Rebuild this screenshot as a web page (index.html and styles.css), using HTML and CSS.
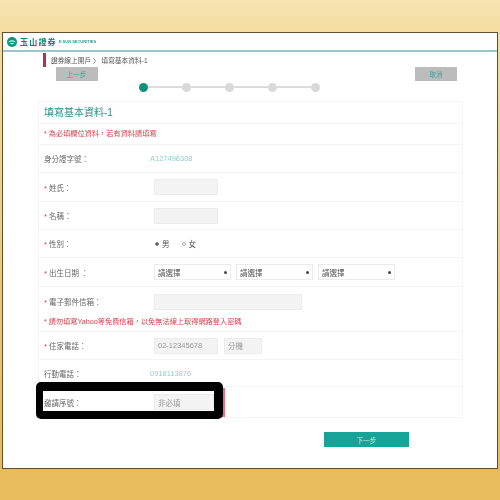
FILE: index.html
```html
<!DOCTYPE html>
<html lang="zh-Hant">
<head>
<meta charset="utf-8">
<title>填寫基本資料-1</title>
<link rel="stylesheet" href="styles.css">
</head>
<body>
<main class="window">
  <div class="soft">
    <header class="topbar">
      <svg class="logo" viewBox="0 0 20 20" aria-hidden="true">
        <circle cx="10" cy="10" r="10" fill="#12907f"/>
        <path d="M2 11 C6 5 14 5 18 11 C14 8.5 6 8.5 2 11Z" fill="#fff"/>
        <path d="M5 13 C8 11.5 12 11.5 15 13 C12 15 8 15 5 13Z" fill="#fff"/>
      </svg>
      <span class="brand">玉山證券</span>
      <span class="brand-en">E.SUN SECURITIES</span>
    </header>
    <div class="crumb"><span class="crumb-mark"></span><span>證券線上開戶 〉 填寫基本資料-1</span></div>
    <div class="actions">
      <span class="btn-grey">上一步</span>
      <span class="btn-grey">取消</span>
    </div>
    <div class="steps">
      <span class="dot active"></span><span class="line"></span>
      <span class="dot"></span><span class="line"></span>
      <span class="dot"></span><span class="line"></span>
      <span class="dot"></span><span class="line"></span>
      <span class="dot"></span>
    </div>
    <section class="card">
      <h1 class="title">填寫基本資料-1</h1>
      <p class="notice"><span class="note">* 為必填欄位資料，若有資料請填寫</span></p>
      <div class="row h28"><span class="label plain">身分證字號：</span><span class="value">A127496308</span></div>
      <div class="row h29"><span class="label"><b>*</b> 姓氏：</span><span class="field w64"></span></div>
      <div class="row h28"><span class="label"><b>*</b> 名稱：</span><span class="field w64"></span></div>
      <div class="row h28"><span class="label"><b>*</b> 性別：</span>
        <span class="gender"><i class="radio on"></i>男<i class="radio gap"></i>女</span></div>
      <div class="row h29"><span class="label"><b>*</b> 出生日期 ：</span>
        <span class="selects">
          <span class="select"><span>請選擇</span><span class="caret"></span></span>
          <span class="select"><span>請選擇</span><span class="caret"></span></span>
          <span class="select"><span>請選擇</span><span class="caret"></span></span>
        </span></div>
      <div class="row-email">
        <div class="email-line"><span class="label"><b>*</b> 電子郵件信箱：</span><span class="field w148"></span></div>
        <p class="note warn">* 請勿填寫Yahoo等免費信箱，以免無法線上取得網路登入密碼</p>
      </div>
      <div class="row h28"><span class="label"><b>*</b> 住家電話：</span>
        <span class="phone"><span class="field w64 txt">02-12345678</span><span class="field w38 txt">分機</span></span></div>
      <div class="row h27"><span class="label plain">行動電話：</span><span class="value">0918113876</span></div>
      <div class="row h30 last"><span class="label plain">邀請序號：</span><span class="field w60 txt">非必填</span></div>
    </section>
    <div class="next-wrap"><span class="btn-next">下一步</span></div>
  </div>
  <div class="mark-red"></div>
  <div class="mark"></div>
</main>
</body>
</html>
```
FILE: styles.css
```css
* { box-sizing: border-box; }
html, body { margin: 0; height: 500px; overflow: hidden; }
body {
  background: linear-gradient(#f6e4b2 0, #f3dda0 32px, #eccb7e 250px, #e8bb5c 470px);
  padding: 32px 2px 32px 2px;
  font-family: "Liberation Sans", "Noto Sans CJK TC", sans-serif;
  font-size: 7.5px;
  color: #666;
}
.window {
  position: relative;
  height: 437px;
  background: #fff;
  border: 1px solid #5e4f30;
  overflow: hidden;
}
.soft { filter: blur(0.45px); height: 100%; }
.topbar {
  display: flex;
  align-items: center;
  height: 19px;
  padding-left: 4px;
  background: #fdfefe;
  border-bottom: 2px solid #9cc8c8;
}
.logo { width: 10px; height: 10px; margin-right: 3px; }
.brand { font-size: 8px; font-weight: 700; color: #12807a; letter-spacing: 1.2px; }
.brand-en { font-size: 4px; font-weight: 700; color: #3c9a94; margin-left: 2px; }
.crumb {
  display: flex;
  align-items: center;
  gap: 5px;
  height: 15px;
  padding-left: 40px;
  font-size: 6.7px;
  color: #555;
}
.crumb-mark { width: 3px; height: 14px; background: #b03058; }
.actions {
  display: flex;
  justify-content: space-between;
  padding: 0 40px 0 52.5px;
}
.btn-grey {
  display: flex;
  align-items: center;
  justify-content: center;
  width: 42px;
  height: 13.5px;
  background: #bcbcbc;
  color: #3f9f98;
  font-size: 6.5px;
}
.steps {
  display: flex;
  align-items: center;
  margin: 0.5px 0 0 136px;
  height: 12px;
}
.dot { width: 9px; height: 9px; border-radius: 50%; background: #d9d9d9; }
.dot.active { background: #12907f; }
.line { width: 34px; height: 2px; background: #dcdcdc; }
.card {
  margin: 8px 0 0 35px;
  width: 425px;
  border: 1px solid #f4f4f4;
}
.title {
  margin: 0;
  height: 22px;
  padding-left: 5px;
  line-height: 22px;
  font-size: 10px;
  font-weight: 400;
  color: #2f8f8a;
  border-bottom: 1px solid #f4f4f4;
}
.notice {
  margin: 0;
  height: 21px;
  padding-left: 5px;
  line-height: 20px;
  border-bottom: 1px solid #f4f4f4;
}
.note { color: #d8404c; font-size: 7.2px; }
.row {
  display: flex;
  align-items: center;
  border-bottom: 1px solid #f4f4f4;
}
.h27 { height: 27px; }
.h28 { height: 28px; }
.h29 { height: 29px; }
.h30 { height: 30px; }
.last { border-bottom: 0; }
.label { flex: none; width: 115px; padding-left: 5px; color: #666; }
.label b { color: #d8404c; font-weight: 400; }
.value { margin-left: -4px; color: #8fd0cc; }
.field {
  display: inline-flex;
  align-items: center;
  height: 16px;
  padding-left: 3px;
  background: #f3f3f3;
  border: 1px solid #ececec;
  color: #999;
}
.w38 { width: 38px; }
.w60 { width: 60px; }
.w64 { width: 64px; }
.w148 { width: 148px; }
.gender { display: flex; align-items: center; gap: 3px; margin-left: 1px; color: #555; }
.radio {
  width: 4px;
  height: 4px;
  border-radius: 50%;
  border: 1px solid #aaa;
}
.radio.on { background: #555; border-color: #888; }
.radio.gap { margin-left: 9px; }
.selects, .phone { display: flex; gap: 5px; }
.phone { gap: 6px; }
.select {
  display: flex;
  align-items: center;
  justify-content: space-between;
  width: 77px;
  height: 16px;
  padding: 0 3px 0 3px;
  background: #fff;
  border: 1px solid #ebebeb;
  color: #555;
}
.caret { width: 3px; height: 3px; border-radius: 50%; background: #444; }
.row-email { height: 45px; border-bottom: 1px solid #f4f4f4; }
.email-line { display: flex; align-items: center; height: 29px; }
.warn { margin: 0; padding-left: 5px; line-height: 11px; }
.next-wrap { display: flex; margin: 14px 0 0 321px; }
.btn-next {
  display: flex;
  align-items: center;
  justify-content: center;
  width: 85px;
  height: 15px;
  background: #17a398;
  color: #cdeeea;
  font-size: 6.5px;
}
.mark-red {
  position: absolute;
  left: 37px;
  top: 355px;
  width: 185px;
  height: 29px;
  border: 1px solid #e8707a;
  border-right-width: 2px;
}
.mark {
  position: absolute;
  left: 33px;
  top: 349px;
  width: 187px;
  height: 37px;
  border-style: solid;
  border-color: #000;
  border-width: 9px 9px 8px 7px;
  border-radius: 5px;
}
```
